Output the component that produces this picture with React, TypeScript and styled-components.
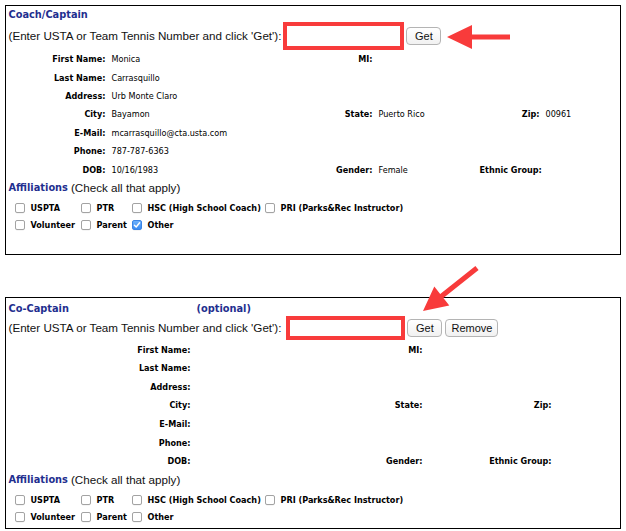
import React from 'react';
import styled, { createGlobalStyle } from 'styled-components';

const GlobalStyle = createGlobalStyle`
  html, body { margin: 0; padding: 0; background: #fff; }
`;

const labelFont = `"DejaVu Sans Condensed", "Liberation Sans", Arial, sans-serif`;
const headFont = `"DejaVu Sans", Verdana, sans-serif`;
const plainFont = `"Liberation Sans", Arial, Helvetica, sans-serif`;
const red = '#f83b3b';
const navy = '#1f2f8f';

const Page = styled.div`
  position: relative;
  width: 626px;
  height: 531px;
  box-sizing: border-box;
  padding: 5px 0 0 5px;
  overflow: hidden;
`;

const Panel = styled.section<{ $padTop: number; $padBottom: number; $gapAbove?: number }>`
  width: 616px;
  box-sizing: border-box;
  border: 1.5px solid #000;
  padding: ${(p) => p.$padTop}px 0 ${(p) => p.$padBottom}px 2.5px;
  margin-top: ${(p) => p.$gapAbove || 0}px;
`;

const HeadingRow = styled.div<{ $cols: string }>`
  display: grid;
  grid-template-columns: ${(p) => p.$cols};
  column-gap: 6px;
  height: 14px;
  align-items: center;
  font-family: ${headFont};
  font-weight: bold;
  font-size: 9.8px;
  color: ${navy};
  white-space: nowrap;
`;

const LookupRow = styled.div<{ $h: number }>`
  display: flex;
  align-items: center;
  height: ${(p) => p.$h}px;
  font-family: ${plainFont};
  font-size: 11.65px;
  color: #111;
  white-space: nowrap;
`;

const NumberInput = styled.input<{ $w: number; $h: number; $ml: number }>`
  box-sizing: border-box;
  width: ${(p) => p.$w}px;
  height: ${(p) => p.$h}px;
  margin: 0 2px 0 ${(p) => p.$ml}px;
  border: 4px solid ${red};
  background: #fff;
  padding: 0 3px;
  outline: none;
`;

const Button = styled.button<{ $w: number }>`
  box-sizing: border-box;
  width: ${(p) => p.$w}px;
  height: 18px;
  margin-right: 3px;
  padding: 0;
  border: 1px solid #b4b4b4;
  border-radius: 4px;
  background: linear-gradient(#ffffff, #f1f1f1);
  font-family: ${plainFont};
  font-size: 11px;
  color: #111;
`;

const InfoGrid = styled.div<{ $cols: string; $rowH: number }>`
  display: grid;
  grid-template-columns: ${(p) => p.$cols};
  grid-auto-rows: ${(p) => p.$rowH}px;
  column-gap: 6px;
  align-items: center;
  font-family: ${labelFont};
  font-size: 9px;
  color: #000;
  white-space: nowrap;
`;

const Label = styled.span`
  font-weight: bold;
  text-align: right;
`;

const Value = styled.span`
  font-weight: normal;
`;

const AffiliationsRow = styled.div`
  height: 17px;
  display: flex;
  align-items: center;
  gap: 3px;
  font-family: ${plainFont};
  font-size: 11.65px;
  color: #111;
  white-space: nowrap;
`;

const AffTitle = styled.span`
  font-family: ${headFont};
  font-weight: bold;
  font-size: 9.8px;
  color: ${navy};
`;

const CheckGrid = styled.div`
  display: grid;
  grid-template-columns: 66px 51px 133px auto;
  grid-auto-rows: 17.5px;
  margin-top: 3.5px;
  padding-left: 6px;
  align-items: center;
  font-family: ${labelFont};
  font-weight: bold;
  font-size: 9px;
  white-space: nowrap;
`;

const CheckCell = styled.label`
  display: flex;
  align-items: center;
  gap: 6px;
`;

const Box = styled.span<{ $checked: boolean }>`
  box-sizing: border-box;
  width: 10px;
  height: 10px;
  border-radius: 2px;
  border: 1px solid ${(p) => (p.$checked ? '#3a84e6' : '#a3a3a3')};
  background: ${(p) => (p.$checked ? 'linear-gradient(#6cb0fb, #3a8cf3)' : '#fff')};
  box-shadow: 0 0.5px 0.5px rgba(0, 0, 0, 0.08);
  display: flex;
  align-items: center;
  justify-content: center;
`;

const Overlay = styled.svg`
  position: absolute;
  left: 0;
  top: 0;
  pointer-events: none;
`;

function Check({ label, checked = false }: { label: string; checked?: boolean }) {
  return (
    <CheckCell>
      <Box $checked={checked}>
        {checked && (
          <svg width="8" height="8" viewBox="0 0 8 8">
            <path d="M1.4 4.2 L3.2 6 L6.6 1.8" fill="none" stroke="#fff" strokeWidth="1.4" strokeLinecap="round" strokeLinejoin="round" />
          </svg>
        )}
      </Box>
      {label}
    </CheckCell>
  );
}

type Person = {
  first?: string;
  last?: string;
  address?: string;
  city?: string;
  state?: string;
  zip?: string;
  email?: string;
  phone?: string;
  dob?: string;
  gender?: string;
};

function Details({ cols, rowH, p }: { cols: string; rowH: number; p: Person }) {
  return (
    <InfoGrid $cols={cols} $rowH={rowH}>
      <Label>First Name:</Label><Value>{p.first}</Value><Label>MI:</Label><Value /><span /><span />
      <Label>Last Name:</Label><Value>{p.last}</Value><span /><span /><span /><span />
      <Label>Address:</Label><Value>{p.address}</Value><span /><span /><span /><span />
      <Label>City:</Label><Value>{p.city}</Value><Label>State:</Label><Value>{p.state}</Value><Label>Zip:</Label><Value>{p.zip}</Value>
      <Label>E-Mail:</Label><Value>{p.email}</Value><span /><span /><span /><span />
      <Label>Phone:</Label><Value>{p.phone}</Value><span /><span /><span /><span />
      <Label>DOB:</Label><Value>{p.dob}</Value><Label>Gender:</Label><Value>{p.gender}</Value><Label>Ethnic Group:</Label><Value />
    </InfoGrid>
  );
}

function Affiliations({ other }: { other: boolean }) {
  return (
    <>
      <AffiliationsRow>
        <AffTitle>Affiliations</AffTitle>
        <span>(Check all that apply)</span>
      </AffiliationsRow>
      <CheckGrid>
        <Check label="USPTA" />
        <Check label="PTR" />
        <Check label="HSC (High School Coach)" />
        <Check label="PRI (Parks&Rec Instructor)" />
        <Check label="Volunteer" />
        <Check label="Parent" />
        <Check label="Other" checked={other} />
      </CheckGrid>
    </>
  );
}

const captainCols = '97px 195px 60px 95px 60px 1fr';
const coCaptainCols = '182px 157px 63px 52px 65px 1fr';

export default function App() {
  const captain: Person = {
    first: 'Monica',
    last: 'Carrasquillo',
    address: 'Urb Monte Claro',
    city: 'Bayamon',
    state: 'Puerto Rico',
    zip: '00961',
    email: 'mcarrasquillo@cta.usta.com',
    phone: '787-787-6363',
    dob: '10/16/1983',
    gender: 'Female',
  };

  return (
    <Page>
      <GlobalStyle />
      <Panel $padTop={1} $padBottom={20}>
        <HeadingRow $cols="1fr">
          <span>Coach/Captain</span>
        </HeadingRow>
        <LookupRow $h={29}>
          (Enter USTA or Team Tennis Number and click 'Get'):
          <NumberInput $w={121} $h={28} $ml={2} />
          <Button $w={35}>Get</Button>
        </LookupRow>
        <Details cols={captainCols} rowH={18.4} p={captain} />
        <Affiliations other />
      </Panel>

      <Panel $padTop={3} $padBottom={1.5} $gapAbove={42}>
        <HeadingRow $cols={coCaptainCols}>
          <span>Co-Captain</span>
          <span>(optional)</span>
        </HeadingRow>
        <LookupRow $h={25}>
          (Enter USTA or Team Tennis Number and click 'Get'):
          <NumberInput $w={119} $h={24} $ml={5} />
          <Button $w={35}>Get</Button>
          <Button $w={53}>Remove</Button>
        </LookupRow>
        <Details cols={coCaptainCols} rowH={18.65} p={{}} />
        <Affiliations other={false} />
      </Panel>

      <Overlay width="626" height="531" viewBox="0 0 626 531">
        <polygon points="510,34.5 472,34.5 472,25 447,37 472,49 472,39.5 510,39.5" fill={red} />
        <polygon
          points="478.6,270 443.4,298 449.3,305.4 423,311 434.3,286.6 440.2,294.1 475.4,266"
          fill={red}
        />
      </Overlay>
    </Page>
  );
}
